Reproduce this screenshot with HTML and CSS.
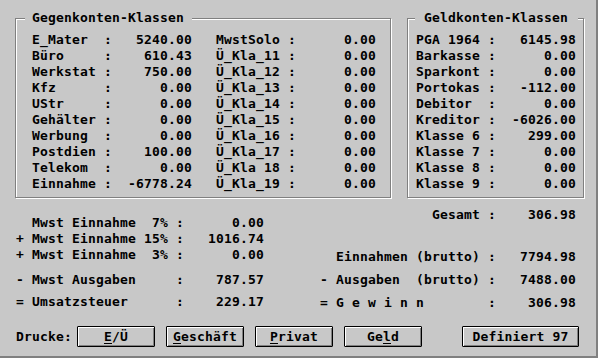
FILE: index.html
```html
<!DOCTYPE html>
<html lang="de">
<head>
  <meta charset="UTF-8" />
  <title>Konten-Übersicht</title>
  <link rel="stylesheet" href="styles.css">
</head>
<body>
  <div class="window">
    <div class="groups">
      <fieldset class="group group-gegen">
        <legend>Gegenkonten-Klassen</legend>
        <div class="cols">
          <div class="col">
            <div class="row"><span>E_Mater</span><span>:</span><span class="val">5240.00</span></div>
            <div class="row"><span>Büro</span><span>:</span><span class="val">610.43</span></div>
            <div class="row"><span>Werkstat</span><span>:</span><span class="val">750.00</span></div>
            <div class="row"><span>Kfz</span><span>:</span><span class="val">0.00</span></div>
            <div class="row"><span>UStr</span><span>:</span><span class="val">0.00</span></div>
            <div class="row"><span>Gehälter</span><span>:</span><span class="val">0.00</span></div>
            <div class="row"><span>Werbung</span><span>:</span><span class="val">0.00</span></div>
            <div class="row"><span>Postdien</span><span>:</span><span class="val">100.00</span></div>
            <div class="row"><span>Telekom</span><span>:</span><span class="val">0.00</span></div>
            <div class="row"><span>Einnahme</span><span>:</span><span class="val">-6778.24</span></div>
          </div>
          <div class="col">
            <div class="row"><span>MwstSolo</span><span>:</span><span class="val">0.00</span></div>
            <div class="row"><span>Ü_Kla_11</span><span>:</span><span class="val">0.00</span></div>
            <div class="row"><span>Ü_Kla_12</span><span>:</span><span class="val">0.00</span></div>
            <div class="row"><span>Ü_Kla_13</span><span>:</span><span class="val">0.00</span></div>
            <div class="row"><span>Ü_Kla_14</span><span>:</span><span class="val">0.00</span></div>
            <div class="row"><span>Ü_Kla_15</span><span>:</span><span class="val">0.00</span></div>
            <div class="row"><span>Ü_Kla_16</span><span>:</span><span class="val">0.00</span></div>
            <div class="row"><span>Ü_Kla_17</span><span>:</span><span class="val">0.00</span></div>
            <div class="row"><span>Ü_Kla 18</span><span>:</span><span class="val">0.00</span></div>
            <div class="row"><span>Ü_Kla_19</span><span>:</span><span class="val">0.00</span></div>
          </div>
        </div>
      </fieldset>
      <fieldset class="group group-geld">
        <legend>Geldkonten-Klassen</legend>
        <div class="col">
          <div class="row"><span>PGA 1964</span><span>:</span><span class="val">6145.98</span></div>
          <div class="row"><span>Barkasse</span><span>:</span><span class="val">0.00</span></div>
          <div class="row"><span>Sparkont</span><span>:</span><span class="val">0.00</span></div>
          <div class="row"><span>Portokas</span><span>:</span><span class="val">-112.00</span></div>
          <div class="row"><span>Debitor</span><span>:</span><span class="val">0.00</span></div>
          <div class="row"><span>Kreditor</span><span>:</span><span class="val">-6026.00</span></div>
          <div class="row"><span>Klasse 6</span><span>:</span><span class="val">299.00</span></div>
          <div class="row"><span>Klasse 7</span><span>:</span><span class="val">0.00</span></div>
          <div class="row"><span>Klasse 8</span><span>:</span><span class="val">0.00</span></div>
          <div class="row"><span>Klasse 9</span><span>:</span><span class="val">0.00</span></div>
        </div>
      </fieldset>
    </div>

    <div class="totals">
      <div class="tax">
        <div class="row"><span></span><span>Mwst Einnahme  7%</span><span>:</span><span class="val">0.00</span></div>
        <div class="row"><span>+</span><span>Mwst Einnahme 15%</span><span>:</span><span class="val">1016.74</span></div>
        <div class="row"><span>+</span><span>Mwst Einnahme  3%</span><span>:</span><span class="val">0.00</span></div>
        <div class="row gap-big"><span>-</span><span>Mwst Ausgaben</span><span>:</span><span class="val">787.57</span></div>
        <div class="row gap-small"><span>=</span><span>Umsatzsteuer</span><span>:</span><span class="val">229.17</span></div>
      </div>
      <div class="sums">
        <div class="row"><span></span><span class="right">Gesamt </span><span>:</span><span class="val">306.98</span></div>
        <div class="row gap-wide"><span></span><span>Einnahmen (brutto)</span><span>:</span><span class="val">7794.98</span></div>
        <div class="row gap-mid"><span>-</span><span>Ausgaben  (brutto)</span><span>:</span><span class="val">7488.00</span></div>
        <div class="row gap-mid"><span>=</span><span>G e w i n n</span><span>:</span><span class="val">306.98</span></div>
      </div>
    </div>

    <div class="actions">
      <span class="caption">Drucke:</span>
      <button class="btn"><u>E</u>/Ü</button>
      <button class="btn"><u>G</u>eschäft</button>
      <button class="btn"><u>P</u>rivat</button>
      <button class="btn">Ge<u>l</u>d</button>
      <button class="btn btn-def">Definiert 97</button>
    </div>
  </div>
</body>
</html>
```

FILE: styles.css
```css
body {
  margin: 0;
  font-family: "DejaVu Sans Mono", "Liberation Mono", monospace;
  font-weight: bold;
  font-size: 13px;
  letter-spacing: 0.17px;
  color: #000;
}
.window {
  width: 598px;
  height: 358px;
  box-sizing: border-box;
  background: #c8c8c8;
  border-right: 2px solid #808080;
  border-bottom: 2px solid #808080;
}

/* group boxes */
.groups {
  display: flex;
  gap: 16px;
  padding: 10px 0 0 15px;
}
.group {
  flex: none;
  box-sizing: border-box;
  margin: 0;
  border: 1px solid #808080;
  box-shadow: inset 1px 1px 0 #fff, 1px 1px 0 #fff;
  padding: 6px 14px 5px 16px;
  min-width: 0;
}
.group-gegen { width: 376px; }
.group legend {
  background: #c8c8c8;
  line-height: 16px;
  white-space: nowrap;
  padding: 0 8px 0 7px;
  margin-left: -7px;
}
.group-geld {
  width: 177px;
  padding: 6px 7px 5px 8px;
}
.group-geld legend {
  padding: 0 10px 0 9px;
  margin-left: -1px;
}
.cols {
  display: flex;
  gap: 24px;
}

/* rows on the 8px character grid */
.row {
  display: grid;
  grid-template-columns: 72px 8px 80px;
  height: 16px;
  line-height: 16px;
  white-space: pre;
}
.val { text-align: right; }
.right { text-align: right; }

/* totals below the groups */
.totals {
  display: flex;
  height: 128px;
  padding-left: 16px;
}
.tax { padding-top: 17px; }
.tax .row { grid-template-columns: 16px 144px 8px 80px; }
.sums {
  padding-top: 9px;
  margin-left: 56px;
}
.sums .row { grid-template-columns: 16px 152px 8px 80px; }
.gap-big { margin-top: 9px; }
.gap-small { margin-top: 6px; }
.gap-wide { margin-top: 26px; }
.gap-mid { margin-top: 7px; }

/* button bar */
.actions {
  display: flex;
  align-items: center;
  gap: 11px;
  padding-left: 16px;
}
.caption { margin-right: -6px; }
.btn {
  width: 78px;
  height: 21px;
  padding: 0;
  font: inherit;
  letter-spacing: inherit;
  color: #000;
  background: #c8c8c8;
  border: 1px solid #000;
  border-radius: 1px;
  box-shadow: inset 1px 1px 0 #fff, inset -1px -1px 0 #808080;
}
.btn u { text-underline-offset: 2px; }
.btn-def {
  width: 117px;
  margin-left: 29px;
}
```
